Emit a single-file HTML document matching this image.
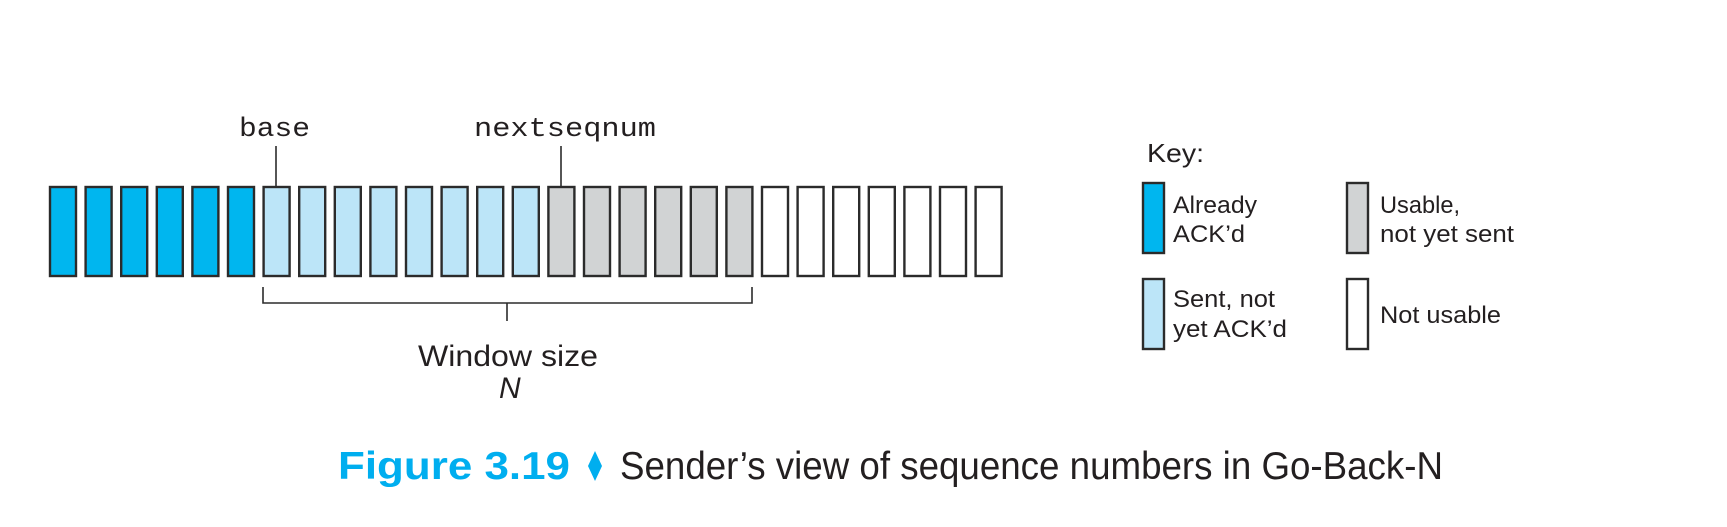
<!DOCTYPE html>
<html><head><meta charset="utf-8"><style>html,body{margin:0;padding:0;background:#fff}svg{display:block}</style></head>
<body>
<svg width="1727" height="527" viewBox="0 0 1727 527" xmlns="http://www.w3.org/2000/svg">
<g stroke="#2b2b2b" stroke-width="2.4">
<rect x="50" y="187" width="26" height="89" fill="#00b6ef"/>
<rect x="85.6" y="187" width="26" height="89" fill="#00b6ef"/>
<rect x="121.2" y="187" width="26" height="89" fill="#00b6ef"/>
<rect x="156.8" y="187" width="26" height="89" fill="#00b6ef"/>
<rect x="192.4" y="187" width="26" height="89" fill="#00b6ef"/>
<rect x="228" y="187" width="26" height="89" fill="#00b6ef"/>
<rect x="263.6" y="187" width="26" height="89" fill="#bce5f8"/>
<rect x="299.2" y="187" width="26" height="89" fill="#bce5f8"/>
<rect x="334.8" y="187" width="26" height="89" fill="#bce5f8"/>
<rect x="370.4" y="187" width="26" height="89" fill="#bce5f8"/>
<rect x="406" y="187" width="26" height="89" fill="#bce5f8"/>
<rect x="441.6" y="187" width="26" height="89" fill="#bce5f8"/>
<rect x="477.2" y="187" width="26" height="89" fill="#bce5f8"/>
<rect x="512.8" y="187" width="26" height="89" fill="#bce5f8"/>
<rect x="548.4" y="187" width="26" height="89" fill="#d1d3d4"/>
<rect x="584" y="187" width="26" height="89" fill="#d1d3d4"/>
<rect x="619.6" y="187" width="26" height="89" fill="#d1d3d4"/>
<rect x="655.2" y="187" width="26" height="89" fill="#d1d3d4"/>
<rect x="690.8" y="187" width="26" height="89" fill="#d1d3d4"/>
<rect x="726.4" y="187" width="26" height="89" fill="#d1d3d4"/>
<rect x="762" y="187" width="26" height="89" fill="#fff"/>
<rect x="797.6" y="187" width="26" height="89" fill="#fff"/>
<rect x="833.2" y="187" width="26" height="89" fill="#fff"/>
<rect x="868.8" y="187" width="26" height="89" fill="#fff"/>
<rect x="904.4" y="187" width="26" height="89" fill="#fff"/>
<rect x="940" y="187" width="26" height="89" fill="#fff"/>
<rect x="975.6" y="187" width="26" height="89" fill="#fff"/>
<rect x="1143" y="183" width="21" height="70" fill="#00b6ef"/>
<rect x="1347" y="183" width="21" height="70" fill="#d1d3d4"/>
<rect x="1143" y="279" width="21" height="70" fill="#bce5f8"/>
<rect x="1347" y="279" width="21" height="70" fill="#fff"/>
</g>
<g stroke="#2b2b2b" stroke-width="1.6" fill="none">
<line x1="276" y1="146" x2="276" y2="186"/>
<line x1="561" y1="146" x2="561" y2="186"/>
<polyline points="263,287 263,303 752,303 752,287"/>
<line x1="507" y1="303" x2="507" y2="321"/>
</g>
<g fill="#231f20">
<text x="239" y="136" font-family="Liberation Mono, monospace" font-size="27" textLength="71" lengthAdjust="spacingAndGlyphs">base</text>
<text x="474" y="136" font-family="Liberation Mono, monospace" font-size="27" textLength="182" lengthAdjust="spacingAndGlyphs">nextseqnum</text>
<text x="418" y="366" font-family="Liberation Sans, sans-serif" font-size="30" textLength="180" lengthAdjust="spacingAndGlyphs">Window size</text>
<text x="499" y="398" font-family="Liberation Sans, sans-serif" font-size="30" font-style="italic">N</text>
<text x="1147" y="162" font-family="Liberation Sans, sans-serif" font-size="26" textLength="57" lengthAdjust="spacingAndGlyphs">Key:</text>
<g font-family="Liberation Sans, sans-serif" font-size="24">
<text x="1173" y="213" textLength="84" lengthAdjust="spacingAndGlyphs">Already</text>
<text x="1173" y="242" textLength="72" lengthAdjust="spacingAndGlyphs">ACK’d</text>
<text x="1380" y="213" textLength="80" lengthAdjust="spacingAndGlyphs">Usable,</text>
<text x="1380" y="242" textLength="134" lengthAdjust="spacingAndGlyphs">not yet sent</text>
<text x="1173" y="307" textLength="102" lengthAdjust="spacingAndGlyphs">Sent, not</text>
<text x="1173" y="337" textLength="114" lengthAdjust="spacingAndGlyphs">yet ACK’d</text>
<text x="1380" y="323" textLength="121" lengthAdjust="spacingAndGlyphs">Not usable</text>
</g>
<text x="338" y="479" font-family="Liberation Sans, sans-serif" font-size="39" font-weight="bold" fill="#00aeef" textLength="232" lengthAdjust="spacingAndGlyphs">Figure 3.19</text>
<polygon points="595,451 602,466 595,481 588,466" fill="#00aeef"/>
<text x="620" y="479" font-family="Liberation Sans, sans-serif" font-size="39" textLength="823" lengthAdjust="spacingAndGlyphs">Sender’s view of sequence numbers in Go-Back-N</text>
</g>
</svg>
</body></html>
